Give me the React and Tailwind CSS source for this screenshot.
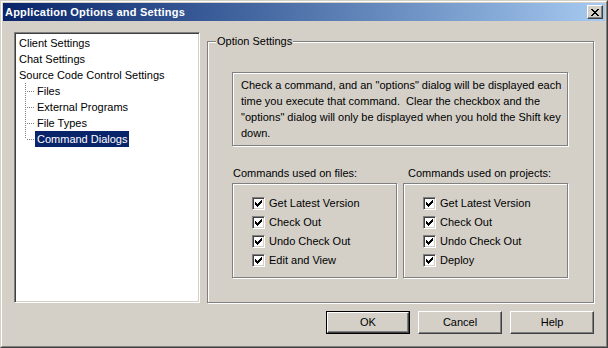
import React from 'react';

const CHECK = [
  [6],
  [5, 6],
  [0, 4, 5, 6],
  [0, 1, 3, 4, 5],
  [0, 1, 2, 3, 4],
  [1, 2, 3],
  [2],
];

const CROSS = [
  [0, 1, 6, 7],
  [1, 2, 5, 6],
  [2, 3, 4, 5],
  [3, 4],
  [2, 3, 4, 5],
  [1, 2, 5, 6],
  [0, 1, 6, 7],
];

function PixelGlyph({ rows, width }) {
  return (
    <svg width={width} height={rows.length} shapeRendering="crispEdges">
      {rows.map((cols, y) =>
        cols.map((x) => <rect key={`${x}-${y}`} x={x} y={y} width="1" height="1" fill="#000" />)
      )}
    </svg>
  );
}

function Checkbox() {
  return (
    <span className="w-[13px] h-[13px] shrink-0 border border-t-[#808080] border-l-[#808080] border-r-white border-b-white shadow-[inset_1px_1px_0_#404040,inset_-1px_-1px_0_#d4d0c8] bg-white flex items-center justify-center">
      <PixelGlyph rows={CHECK} width={7} />
    </span>
  );
}

function TreeBranch({ last }) {
  return (
    <svg width="10" height="16" shapeRendering="crispEdges" className="shrink-0">
      <line x1="0.5" y1="0" x2="0.5" y2={last ? 8 : 16} stroke="#808080" strokeDasharray="1 1" />
      <line x1="2" y1="8.5" x2="10" y2="8.5" stroke="#808080" strokeDasharray="1 1" />
    </svg>
  );
}

function CommandList({ title, items, labelPad }) {
  return (
    <div className="flex flex-col w-[165px]">
      <div className={labelPad ? 'leading-[13px] pl-[5px]' : 'leading-[13px] pl-px'}>{title}</div>
      <div className="mt-[3px] h-[95px] border border-[#808080] shadow-[inset_1px_1px_0_#fff,1px_1px_0_#fff] pt-[10px] pl-[19px] flex flex-col">
        {items.map((item) => (
          <div key={item} className="h-[19px] flex items-center gap-[4px]">
            <Checkbox />
            <span className="leading-[13px]">{item}</span>
          </div>
        ))}
      </div>
    </div>
  );
}

function Button({ label, isDefault }) {
  const face = (
    <div className="w-full h-full border border-t-white border-l-white border-r-[#404040] border-b-[#404040] shadow-[inset_-1px_-1px_0_#808080] flex items-center justify-center">
      {label}
    </div>
  );
  if (isDefault) {
    return <div className="w-[84px] h-[23px] border border-black">{face}</div>;
  }
  return <div className="w-[84px] h-[23px]">{face}</div>;
}

export default function App() {
  const tree = ['Files', 'External Programs', 'File Types', 'Command Dialogs'];

  return (
    <div className="w-[608px] h-[348px] bg-[#d4d0c8] text-black text-[11px] font-['Liberation_Sans',Arial,sans-serif] border border-t-[#d4d0c8] border-l-[#d4d0c8] border-r-[#404040] border-b-[#404040]">
      <div className="h-full border border-t-white border-l-white border-r-[#808080] border-b-[#808080] p-px flex flex-col">
        <div className="h-[18px] shrink-0 bg-gradient-to-r from-[#0a246a] to-[#a6caf0] flex items-center justify-between pl-[2px] pr-[2px]">
          <span className="text-white font-bold leading-[13px] tracking-[0.2px]">Application Options and Settings</span>
          <div className="w-[16px] h-[14px] bg-[#d4d0c8] border border-t-white border-l-white border-r-[#404040] border-b-[#404040] shadow-[inset_-1px_-1px_0_#808080] flex items-center justify-center">
            <PixelGlyph rows={CROSS} width={8} />
          </div>
        </div>

        <div className="flex items-start pl-[11px] pt-[11px] h-[282px] shrink-0">
          <div className="w-[186px] h-[271px] bg-white border border-t-[#808080] border-l-[#808080] border-r-white border-b-white shadow-[inset_1px_1px_0_#404040,inset_-1px_-1px_0_#d4d0c8] pt-[2px] pl-[4px]">
            <div className="leading-[16px]">Client Settings</div>
            <div className="leading-[16px]">Chat Settings</div>
            <div className="leading-[16px]">Source Code Control Settings</div>
            {tree.map((item, i) => (
              <div key={item} className="h-[16px] flex items-center pl-[6px]">
                <TreeBranch last={i === tree.length - 1} />
                <span
                  className={
                    i === tree.length - 1
                      ? 'px-[2px] leading-[16px] bg-[#0a246a] text-white'
                      : 'px-[2px] leading-[16px]'
                  }
                >
                  {item}
                </span>
              </div>
            ))}
          </div>

          <div className="relative ml-[7px] mt-[9px] w-[387px] h-[262px] border border-[#808080] shadow-[inset_1px_1px_0_#fff,1px_1px_0_#fff] pl-[24px] pt-[30px]">
            <span className="absolute -top-[7px] left-[8px] px-[1px] bg-[#d4d0c8] leading-[13px]">Option Settings</span>

            <div className="w-[336px] h-[74px] border border-[#808080] shadow-[inset_1px_1px_0_#fff,1px_1px_0_#fff] pl-[8px] pt-[4px] leading-[16px] whitespace-nowrap">
              Check a command, and an "options" dialog will be displayed each
              <br />
              time you execute that command.&nbsp; Clear the checkbox and the
              <br />
              "options" dialog will only be displayed when you hold the Shift key
              <br />
              down.
            </div>

            <div className="flex gap-[6px] mt-[21px]">
              <CommandList
                title="Commands used on files:"
                items={['Get Latest Version', 'Check Out', 'Undo Check Out', 'Edit and View']}
              />
              <CommandList
                title="Commands used on projects:"
                labelPad
                items={['Get Latest Version', 'Check Out', 'Undo Check Out', 'Deploy']}
              />
            </div>
          </div>
        </div>

        <div className="flex justify-end gap-[8px] pr-[11px] mt-[8px]">
          <Button label="OK" isDefault />
          <Button label="Cancel" />
          <Button label="Help" />
        </div>
      </div>
    </div>
  );
}
